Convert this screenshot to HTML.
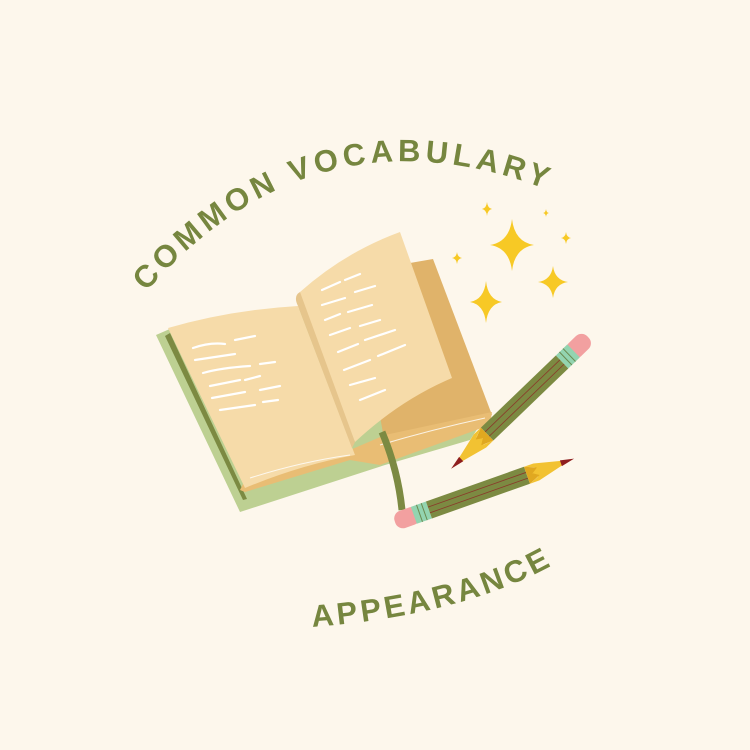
<!DOCTYPE html>
<html><head><meta charset="utf-8"><style>
html,body{margin:0;padding:0;background:#fdf7ec;}
svg{display:block}
text{font-family:"Liberation Sans",sans-serif;font-weight:bold;fill:#76863f;}
</style></head><body>
<svg width="750" height="750" viewBox="0 0 750 750" xmlns="http://www.w3.org/2000/svg">
<rect width="750" height="750" fill="#fdf7ec"/>
<defs>
<path id="top" d="M 146 292 Q 315 100 548 190"/>
<path id="bot" d="M 312 627 Q 470 615 565 558"/>
<g id="pencil">
  <rect x="0" y="-9" width="26" height="18" rx="8" fill="#f2a0a0"/>
  <rect x="20" y="-9" width="16" height="18" fill="#93d4b0"/>
  <line x1="26" y1="-9" x2="26" y2="9" stroke="#6b8a50" stroke-width="1"/>
  <line x1="31" y1="-9" x2="31" y2="9" stroke="#6b8a50" stroke-width="1"/>
  <rect x="36" y="-9" width="104" height="18" fill="#7c8a42"/>
  <line x1="36" y1="-3" x2="140" y2="-3" stroke="#8a3a2a" stroke-width="0.8"/>
  <line x1="36" y1="3" x2="140" y2="3" stroke="#8a3a2a" stroke-width="0.8"/>
  <path d="M140 -9 L150 -5 L146 0 L150 5 L140 9 L150 9 L178 2 L178 -2 L150 -9 Z" fill="#f2c232"/>
  <path d="M140 -9 L152 -4 L146 0 L152 4 L140 9 Z" fill="#e0a820"/>
  <path d="M176 -3 L190 0 L176 3 Z" fill="#8e1e1e"/>
</g>
<path id="star" d="M0 -1 Q0.12 -0.12 1 0 Q0.12 0.12 0 1 Q-0.12 0.12 -1 0 Q-0.12 -0.12 0 -1 Z" fill="#f7c925"/>
</defs>

<text font-size="31" letter-spacing="4.5"><textPath href="#top">COMMON VOCABULARY</textPath></text>
<text font-size="31" letter-spacing="3.5"><textPath href="#bot">APPEARANCE</textPath></text>

<use href="#star" transform="translate(512,245) scale(22,26)"/>
<use href="#star" transform="translate(553,282) scale(15,16)"/>
<use href="#star" transform="translate(486,302) scale(16,21)"/>
<use href="#star" transform="translate(487,209) scale(5,7)"/>
<use href="#star" transform="translate(457,258) scale(5,6)"/>
<use href="#star" transform="translate(566,238) scale(5,6)"/>
<use href="#star" transform="translate(546,213) scale(3,4)"/>

<path d="M156 335 L172 328 L360 300 L490 410 L470 440 L385 465 L240 512 Z" fill="#bdd092"/>
<path d="M165 336 L243 500 L247 499 L170 333 Z" fill="#7c8a42"/>
<path d="M410 263 L433 259 L492 415 L385 445 L360 300 Z" fill="#e0b36a"/>
<path d="M240 490 L245 492 L350 460 L380 465 L490 425 L492 412 L385 435 L350 450 L245 480 Z" fill="#e9bd74"/>
<path d="M168 328 Q230 310 298 306 L355 455 Q300 465 245 488 Z" fill="#f6dba9"/>
<path d="M300 292 Q345 252 400 232 L452 378 Q400 400 355 442 L298 306 Z" fill="#f6dba9"/>
<path d="M298 306 Q293 296 300 292 L355 442 L352 448 Z" fill="#e6c58c"/>
<path d="M250 478 Q300 462 350 455 M380 445 Q430 430 485 418" stroke="#fff" stroke-width="1" fill="none" opacity="0.8"/>
<g stroke="#fff" stroke-width="2.2" fill="none" stroke-linecap="round">
<path d="M193 348 Q210 342 225 344 M235 340 L255 336 M195 360 L235 354 M203 373 Q220 368 250 366 M260 364 L275 362 M210 386 L240 380 M245 380 L260 376 M212 398 L245 392 M260 390 L280 386 M220 410 L255 405 M263 402 L278 400"/>
<path d="M322 290 L340 282 M345 280 L360 274 M322 305 L345 298 M355 292 L375 286 M325 320 L340 314 M348 312 L372 305 M330 335 L350 328 M360 326 L380 320 M338 352 L358 344 M365 340 L395 330 M344 370 L370 360 M378 356 L405 345 M350 385 L375 378 M360 400 L385 390"/>
</g>
<path d="M382 432 Q398 470 402 510" stroke="#7c8a42" stroke-width="7" fill="none"/>

<use href="#pencil" transform="translate(588,337) rotate(136.1)"/>
<use href="#pencil" transform="translate(395,522) rotate(-19.5)"/>
</svg>
</body></html>
